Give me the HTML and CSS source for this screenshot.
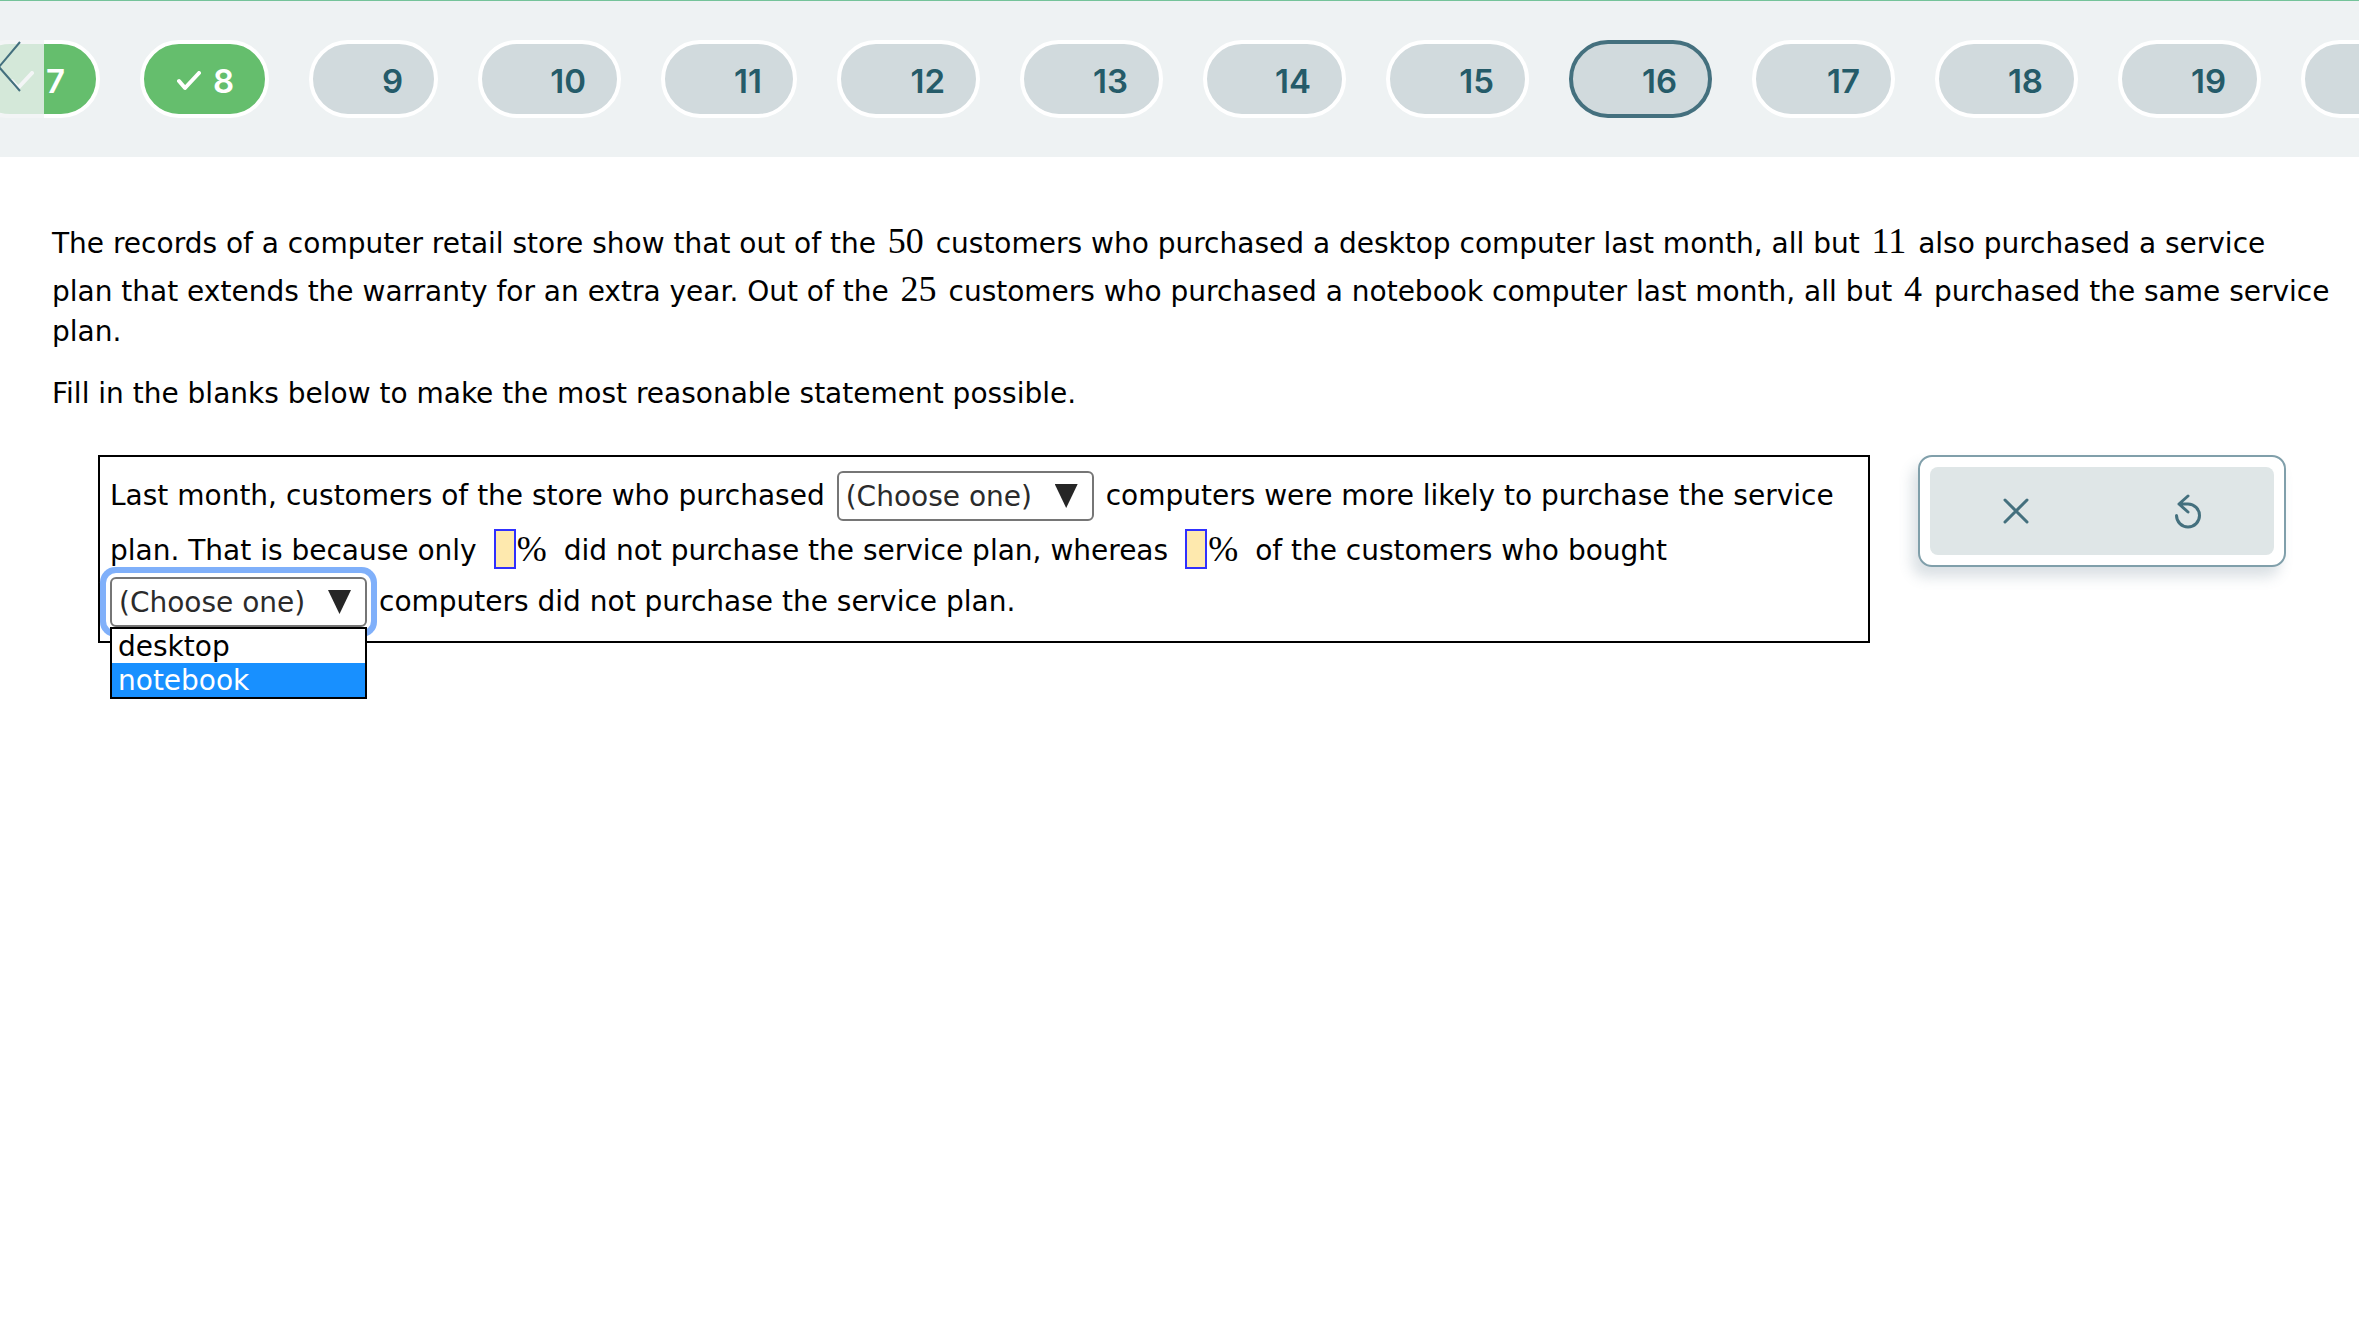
FILE: index.html
```html
<!DOCTYPE html>
<html lang="en">
<head>
<meta charset="utf-8">
<title>Question 16</title>
<link rel="stylesheet" href="styles.css">
</head>
<body>
<header class="topbar">
  <nav class="questions" aria-label="Questions">
    <button class="pill single done"><svg class="tick" viewBox="0 0 24 20" aria-hidden="true"><path d="M2 10l6 7L22 2"/></svg><span>7</span></button>
    <button class="pill single done"><svg class="tick" viewBox="0 0 24 20" aria-hidden="true"><path d="M2 10l6 7L22 2"/></svg><span>8</span></button>
    <button class="pill single">9</button>
    <button class="pill">10</button>
    <button class="pill narrow">11</button>
    <button class="pill">12</button>
    <button class="pill">13</button>
    <button class="pill">14</button>
    <button class="pill">15</button>
    <button class="pill current" aria-current="page">16</button>
    <button class="pill">17</button>
    <button class="pill">18</button>
    <button class="pill">19</button>
    <button class="pill" aria-label="Next question"></button>
  </nav>
  <button class="scroll-back" aria-label="Scroll back"><svg viewBox="0 0 44 78" aria-hidden="true"><path d="M20 2L-1 27L20 51"/></svg></button>
</header>
<main class="content">
  <p class="problem">The records of a computer retail store show that out of the <span class="num">50</span> customers who purchased a desktop computer last month, all but <span class="num">11</span> also purchased a service<br>plan that extends the warranty for an extra year. Out of the <span class="num">25</span> customers who purchased a notebook computer last month, all but <span class="num">4</span> purchased the same service</p>
  <p class="problem-end">plan.</p>
  <p class="instruction">Fill in the blanks below to make the most reasonable statement possible.</p>
  <div class="work">
    <section class="statement">
      <div class="line">
        <span>Last month, customers of the store who purchased</span>
        <span class="choice"><select aria-label="Computer more likely to get the plan"><option>(Choose one)</option><option>desktop</option><option>notebook</option></select></span>
        <span>computers were more likely to purchase the service</span>
      </div>
      <div class="line answers">
        <span class="text">plan. That is because only</span>
        <label class="percent"><input type="text" aria-label="First percentage"><span class="sign">%</span></label>
        <span class="text">did not purchase the service plan, whereas</span>
        <label class="percent"><input type="text" aria-label="Second percentage"><span class="sign">%</span></label>
        <span class="text">of the customers who bought</span>
      </div>
      <div class="line">
        <span class="choice open"><select aria-label="Computer bought"><option>(Choose one)</option><option>desktop</option><option>notebook</option></select>
          <ul class="menu" role="listbox"><li role="option">desktop</li><li class="active" role="option" aria-selected="true">notebook</li></ul>
        </span>
        <span>computers did not purchase the service plan.</span>
      </div>
    </section>
    <aside class="tools">
      <div class="tool-row">
        <button aria-label="Clear"><svg viewBox="0 0 36 36" aria-hidden="true"><path d="M7 7L29 29M29 7L7 29"/></svg></button>
        <button aria-label="Undo"><svg viewBox="0 0 36 36" aria-hidden="true"><path d="M18 3L9 11L18 19M9 11H18A11.500 11.500 0 1 1 6.500 22.500"/></svg></button>
      </div>
    </aside>
  </div>
</main>
</body>
</html>
```
FILE: styles.css
```css
* { box-sizing: border-box; }
body {
  min-height: 100vh;
  margin: 0;
  background: #fff;
  color: #000;
  font: 28px/40px "DejaVu Sans", sans-serif;
}
button { border: 0; padding: 0; background: none; }
p { margin: 0; }

.topbar {
  position: relative;
  height: 157px;
  padding-top: 39px;
  border-top: 1px solid #74c39a;
  background: #eef2f3;
  overflow: hidden;
}
.questions {
  display: flex;
  gap: 40px;
  margin-left: -29px;
}
.pill {
  display: flex;
  flex: none;
  align-items: center;
  justify-content: flex-end;
  gap: 12px;
  width: 143px;
  height: 78px;
  padding: 4px 31px 0 0;
  border: 4px solid #fff;
  border-radius: 39px;
  background: #d1dadd;
  color: #255b69;
  font: 600 33px/40px Inter, sans-serif;
}
.pill.single { width: 129px; }
.pill.narrow { width: 136px; }
.pill.current { border-color: #44707e; }
.pill.done { background: #65be6d; color: #fff; }
.tick { width: 24px; height: 20px; }
.tick path {
  fill: none;
  stroke: #fff;
  stroke-width: 4;
  stroke-linecap: round;
  stroke-linejoin: round;
}
.scroll-back {
  position: absolute;
  left: 0;
  top: 39px;
  width: 44px;
  height: 78px;
  background: rgba(240, 243, 244, .8);
}
.scroll-back svg { display: block; width: 44px; height: 78px; }
.scroll-back path { fill: none; stroke: #44707e; stroke-width: 2; }

.content { padding: 63px 0 120px 52px; }
.num,
.sign { font-family: "Liberation Serif", serif; font-size: 36px; line-height: 40px; }
.num { margin: 0 3px; }
.problem { line-height: 48px; white-space: nowrap; }
.problem-end { line-height: 32px; }
.instruction { margin-top: 26px; }

.work {
  display: flex;
  align-items: flex-start;
  gap: 48px;
  margin: 41px 73px 0 46px;
}
.statement {
  display: flex;
  flex: 1;
  flex-direction: column;
  gap: 8px;
  padding: 14px 10px;
  border: 2px solid #000;
  white-space: nowrap;
}
.line { display: flex; align-items: center; gap: 12px; }
.answers { gap: 17px; height: 40px; }
.text { padding-top: 4px; }
.choice { position: relative; flex: none; width: 257px; height: 50px; }
.choice select {
  display: block;
  width: 100%;
  height: 50px;
  padding: 2px 7px 0;
  border: 2px solid #767676;
  border-radius: 6px;
  outline: 0;
  appearance: none;
  background: #fff;
  color: #2b2b2b;
  font: inherit;
}
.choice::after {
  content: "";
  position: absolute;
  right: 16px;
  top: 13px;
  width: 23px;
  height: 24px;
  background: #262626;
  clip-path: polygon(0 0, 100% 0, 50% 100%);
}
.open select { box-shadow: 0 0 0 4px #fff, 0 0 0 10px #80b0fa; }
.menu {
  position: absolute;
  z-index: 2;
  left: 0;
  top: 50px;
  width: 100%;
  margin: 0;
  padding: 0;
  border: 2px solid #000;
  background: #fff;
  line-height: 32px;
  list-style: none;
}
.menu li { padding: 2px 6px 0; }
.menu .active { background: #1890ff; color: #fff; }
.percent { display: flex; align-items: center; gap: 1px; }
.percent input {
  width: 22px;
  height: 40px;
  padding: 0;
  border: 2px solid #3030ff;
  background: #fee9ae;
}

.tools {
  width: 368px;
  padding: 10px;
  border: 2px solid #809faa;
  border-radius: 14px;
  background: #fff;
  box-shadow: -6px 10px 14px rgba(68, 100, 120, .2);
}
.tool-row {
  display: grid;
  grid-template-columns: 1fr 1fr;
  height: 88px;
  border-radius: 8px;
  background: #dfe6e7;
}
.tool-row button { display: grid; place-items: center; }
.tool-row svg { width: 36px; height: 36px; }
.tool-row path {
  fill: none;
  stroke: #44707e;
  stroke-width: 3;
  stroke-linecap: round;
  stroke-linejoin: round;
}
```
